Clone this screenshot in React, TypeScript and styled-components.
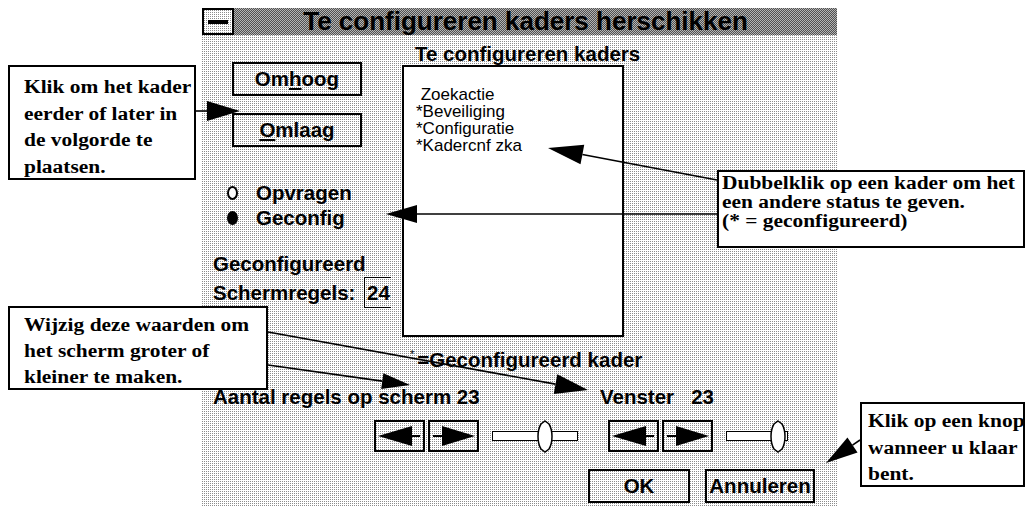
import React from 'react';
import styled, { createGlobalStyle } from 'styled-components';

const GlobalStyle = createGlobalStyle`
  html, body {
    margin: 0;
    padding: 0;
    background: #fff;
  }
  body {
    width: 1028px;
    height: 506px;
    overflow: hidden;
  }
`;

// sparse dither: one grey pixel in every 2x2 cell
const lightDither = `
  background-color: #fff;
  background-image:
    linear-gradient(180deg, transparent 1px, #fff 1px),
    linear-gradient(90deg, #8c8c8c 1px, #fff 1px);
  background-size: 2px 2px;
`;

// dense checkerboard for the title bar
const darkDither = `
  background-color: #b4b4b4;
  background-image: repeating-conic-gradient(#505050 0 25%, #b4b4b4 0 50%);
  background-size: 2px 2px;
`;

const Page = styled.div`
  position: relative;
  width: 1028px;
  height: 506px;
  font-family: 'Liberation Sans', Arial, sans-serif;
  color: #000;
`;

const Dialog = styled.div`
  margin-left: 202px;
  padding-top: 8px;
  width: 635px;
  height: 506px;
  box-sizing: border-box;
  display: flex;
  flex-direction: column;
`;

const TitleBar = styled.div`
  height: 27px;
  display: flex;
  ${darkDither}
`;

const MenuBox = styled.div`
  width: 32px;
  height: 27px;
  box-sizing: border-box;
  border: 2px solid #000;
  display: flex;
  align-items: center;
  justify-content: center;
  ${lightDither}

  &::after {
    content: '';
    width: 20px;
    height: 4px;
    background: #000;
  }
`;

const Title = styled.div`
  flex: 1;
  text-align: center;
  font-size: 26px;
  font-weight: bold;
  line-height: 27px;
  padding-right: 20px;
`;

const Body = styled.div`
  flex: 1;
  padding-left: 11px;
  display: flex;
  flex-direction: column;
  font-size: 20.5px;
  font-weight: bold;
  line-height: 22px;
  ${lightDither}
`;

const TopSection = styled.div`
  display: grid;
  grid-template-columns: 189px 222px;
  height: 302px;
`;

const LeftColumn = styled.div`
  padding-top: 27px;
  display: flex;
  flex-direction: column;
`;

const PushButton = styled.div<{ $width: number }>`
  width: ${(p) => p.$width}px;
  height: 34px;
  box-sizing: border-box;
  border: 2px solid #000;
  display: flex;
  align-items: center;
  justify-content: center;
`;

const StackButton = styled(PushButton)`
  margin-left: 19px;
  & + & {
    margin-top: 17px;
  }
`;

const Key = styled.span`
  text-decoration: underline;
  text-underline-offset: 2px;
`;

const RadioGroup = styled.div`
  margin-top: 35px;
  display: flex;
  flex-direction: column;
  gap: 3px;
`;

const RadioRow = styled.div`
  display: flex;
  align-items: center;
  padding-left: 14px;
  gap: 18px;
`;

const RadioDot = styled.span<{ $on?: boolean }>`
  width: 11px;
  height: 14px;
  box-sizing: border-box;
  border: 2px solid #000;
  border-radius: 50%;
  background: ${(p) => (p.$on ? '#000' : '#fff')};
`;

const FieldLabel = styled.div`
  margin-top: 24px;
`;

const FieldRow = styled.div`
  margin-top: 2px;
  display: flex;
  align-items: center;
  height: 31px;
`;

const FieldBox = styled.span`
  margin-left: 9px;
  width: 27px;
  height: 31px;
  box-sizing: border-box;
  border: 1px solid #000;
  border-right: none;
  display: flex;
  align-items: center;
  justify-content: center;
`;

const RightColumn = styled.div`
  padding-top: 8px;
  display: flex;
  flex-direction: column;
`;

const ListTitle = styled.div`
  padding-left: 13px;
  white-space: nowrap;
`;

const ListBox = styled.div`
  flex: 1;
  background: #fff;
  border: 2px solid #000;
  padding: 19px 0 0 12px;
  font-size: 17px;
  font-weight: normal;
  line-height: 17px;
  white-space: pre;
`;

const Footnote = styled.div`
  margin-top: 6px;
  padding-left: 197px;
`;

const Sup = styled.span`
  font-size: 11px;
  font-weight: normal;
  vertical-align: 9px;
  margin-right: 3px;
`;

const LabelRow = styled.div`
  margin-top: 15px;
  display: grid;
  grid-template-columns: 387px auto;
  white-space: pre;
`;

const ControlRow = styled.div`
  margin-top: 12px;
  padding-left: 161px;
  display: flex;
  gap: 30px;
`;

const Scroller = styled.div`
  display: flex;
  align-items: center;
`;

const ArrowButton = styled.div`
  width: 51px;
  height: 32px;
  box-sizing: border-box;
  border: 2px solid #000;
  margin-right: 3px;
  display: flex;
`;

const Track = styled.div<{ $width: number }>`
  position: relative;
  margin-left: 10px;
  width: ${(p) => p.$width}px;
  height: 10px;
  box-sizing: border-box;
  border: 1.5px solid #000;
  background: #fff;
`;

const Thumb = styled.svg<{ $at: number }>`
  position: absolute;
  left: ${(p) => p.$at}px;
  top: -12px;
`;

const ButtonRow = styled.div`
  margin-top: 17px;
  padding-left: 375px;
  display: flex;
  gap: 15px;
`;

type Box = {
  $left: number;
  $top: number;
  $width: number;
  $height: number;
  $lead: number;
  $padTop: number;
  $padLeft: number;
};

const Callout = styled.div<Box>`
  position: absolute;
  z-index: 3;
  left: ${(p) => p.$left}px;
  top: ${(p) => p.$top}px;
  width: ${(p) => p.$width}px;
  height: ${(p) => p.$height}px;
  box-sizing: border-box;
  border: 2px solid #000;
  background: #fff;
  padding: ${(p) => p.$padTop}px 0 0 ${(p) => p.$padLeft}px;
  font-family: 'Liberation Serif', 'Times New Roman', serif;
  font-size: 18px;
  font-weight: bold;
  line-height: ${(p) => p.$lead}px;
  overflow: hidden;
`;

// the help text in the manual is printed a little wider than plain Times
const CalloutText = styled.div`
  white-space: pre;
  transform: scaleX(1.19);
  transform-origin: 0 0;
`;

const Overlay = styled.svg`
  position: absolute;
  left: 0;
  top: 0;
  z-index: 2;
  pointer-events: none;
`;

const ArrowGlyph: React.FC<{ dir: 'left' | 'right' }> = ({ dir }) => (
  <svg width="47" height="28" viewBox="0 0 47 28">
    {dir === 'left' ? (
      <>
        <polygon points="2,14 36,4 36,24" fill="#000" />
        <line x1="36" y1="14" x2="44" y2="14" stroke="#000" strokeWidth="2" />
      </>
    ) : (
      <>
        <line x1="3" y1="14" x2="12" y2="14" stroke="#000" strokeWidth="2" />
        <polygon points="45,14 12,4 12,24" fill="#000" />
      </>
    )}
  </svg>
);

const ScrollControl: React.FC<{ track: number; thumb: number }> = ({
  track,
  thumb,
}) => (
  <Scroller>
    <ArrowButton>
      <ArrowGlyph dir="left" />
    </ArrowButton>
    <ArrowButton>
      <ArrowGlyph dir="right" />
    </ArrowButton>
    <Track $width={track}>
      <Thumb $at={thumb} width="16" height="33" viewBox="0 0 16 33">
        <path
          d="M8 1 L12 4 Q15 9 15 16.5 Q15 24 12 29 L8 32 L4 29 Q1 24 1 16.5 Q1 9 4 4 Z"
          fill="#fff"
          stroke="#000"
          strokeWidth="1.5"
        />
      </Thumb>
    </Track>
  </Scroller>
);

type Arrow = {
  x1: number;
  y1: number;
  x2: number;
  y2: number;
  len: number;
  half: number;
};

const arrows: Arrow[] = [
  { x1: 196, y1: 111, x2: 240, y2: 111, len: 33, half: 10 },
  { x1: 717, y1: 180, x2: 548, y2: 148, len: 35, half: 10 },
  { x1: 717, y1: 214, x2: 386, y2: 214, len: 31, half: 9 },
  { x1: 268, y1: 332, x2: 588, y2: 390, len: 33, half: 10 },
  { x1: 268, y1: 365, x2: 410, y2: 385, len: 28, half: 8 },
  { x1: 860, y1: 440, x2: 826, y2: 463, len: 32, half: 9 },
];

const Pointer: React.FC<Arrow> = ({ x1, y1, x2, y2, len, half }) => {
  const l = Math.hypot(x2 - x1, y2 - y1);
  const ux = (x2 - x1) / l;
  const uy = (y2 - y1) / l;
  const bx = x2 - ux * len;
  const by = y2 - uy * len;
  return (
    <g>
      <line x1={x1} y1={y1} x2={bx} y2={by} stroke="#000" strokeWidth="1.6" />
      <polygon
        points={`${x2},${y2} ${bx - uy * half},${by + ux * half} ${
          bx + uy * half
        },${by - ux * half}`}
        fill="#000"
      />
    </g>
  );
};

const items = [' Zoekactie', '*Beveiliging', '*Configuratie', '*Kadercnf zka'];

const App: React.FC = () => (
  <Page>
    <GlobalStyle />
    <Dialog>
      <TitleBar>
        <MenuBox />
        <Title>Te configureren kaders herschikken</Title>
      </TitleBar>
      <Body>
        <TopSection>
          <LeftColumn>
            <StackButton $width={130}>
              Om<Key>h</Key>oog
            </StackButton>
            <StackButton $width={130}>
              <Key>O</Key>mlaag
            </StackButton>
            <RadioGroup>
              <RadioRow>
                <RadioDot />
                Opvragen
              </RadioRow>
              <RadioRow>
                <RadioDot $on />
                Geconfig
              </RadioRow>
            </RadioGroup>
            <FieldLabel>Geconfigureerd</FieldLabel>
            <FieldRow>
              Schermregels:
              <FieldBox>24</FieldBox>
            </FieldRow>
          </LeftColumn>
          <RightColumn>
            <ListTitle>Te configureren kaders</ListTitle>
            <ListBox>
              {items.map((item) => (
                <div key={item}>{item}</div>
              ))}
            </ListBox>
          </RightColumn>
        </TopSection>
        <Footnote>
          <Sup>*</Sup>=Geconfigureerd kader
        </Footnote>
        <LabelRow>
          <span>Aantal regels op scherm 23</span>
          <span>Venster   23</span>
        </LabelRow>
        <ControlRow>
          <ScrollControl track={86} thumb={44} />
          <ScrollControl track={62} thumb={43} />
        </ControlRow>
        <ButtonRow>
          <PushButton $width={102}>OK</PushButton>
          <PushButton $width={110}>Annuleren</PushButton>
        </ButtonRow>
      </Body>
    </Dialog>

    <Overlay width="1028" height="506" viewBox="0 0 1028 506">
      {arrows.map((a) => (
        <Pointer key={`${a.x1}-${a.y1}`} {...a} />
      ))}
    </Overlay>

    <Callout
      $left={8}
      $top={65}
      $width={188}
      $height={115}
      $lead={26.5}
      $padTop={7}
      $padLeft={14}
    >
      <CalloutText>
        {'Klik om het kader\neerder of later in\nde volgorde te\nplaatsen.'}
      </CalloutText>
    </Callout>
    <Callout
      $left={717}
      $top={170}
      $width={308}
      $height={78}
      $lead={19}
      $padTop={2}
      $padLeft={3}
    >
      <CalloutText>
        {'Dubbelklik op een kader om het\neen andere status te geven.\n(* = geconfigureerd)'}
      </CalloutText>
    </Callout>
    <Callout
      $left={8}
      $top={306}
      $width={260}
      $height={84}
      $lead={26}
      $padTop={4}
      $padLeft={14}
    >
      <CalloutText>
        {'Wijzig deze waarden om\nhet scherm groter of\nkleiner te maken.'}
      </CalloutText>
    </Callout>
    <Callout
      $left={860}
      $top={402}
      $width={165}
      $height={85}
      $lead={26.5}
      $padTop={4}
      $padLeft={6}
    >
      <CalloutText>{'Klik op een knop\nwanneer u klaar\nbent.'}</CalloutText>
    </Callout>
  </Page>
);

export default App;
